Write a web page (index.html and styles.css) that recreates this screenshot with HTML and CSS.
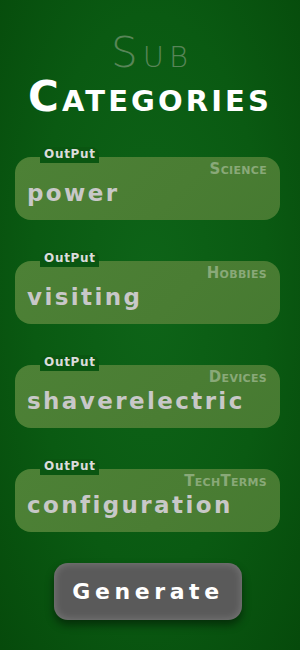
FILE: index.html
```html
<html>

<head>
  <title>Sub Categories</title>
  <link rel="stylesheet" href="styles.css">
</head>

<body>
  <div class="page">
    <div class="title">
      <div class="title-sub">Sub</div>
      <div class="title-main">Categories</div>
    </div>

    <div class="list">
      <div class="card">
        <span class="tab">OutPut</span>
        <div class="category">Science</div>
        <div class="word">power</div>
      </div>
      <div class="card">
        <span class="tab">OutPut</span>
        <div class="category">Hobbies</div>
        <div class="word">visiting</div>
      </div>
      <div class="card">
        <span class="tab">OutPut</span>
        <div class="category">Devices</div>
        <div class="word">shaverelectric</div>
      </div>
      <div class="card">
        <span class="tab">OutPut</span>
        <div class="category">TechTerms</div>
        <div class="word">configuration</div>
      </div>
    </div>

    <div class="actions">
      <button class="generate">Generate</button>
    </div>
  </div>
</body>

</html>
```

FILE: styles.css
```css
body {
  margin: 0;
  width: 300px;
  height: 650px;
  overflow: hidden;
  font-family: 'DejaVu Sans', sans-serif;
  background: radial-gradient(ellipse at 50% 45%, #0e6418 0%, #0a5a12 55%, #064a0b 100%);
}

.page {
  display: flex;
  flex-direction: column;
  padding-top: 32px;
}

.title {
  text-align: center;
  line-height: 1;
}

.title-sub {
  font-size: 42px;
  font-weight: 200;
  color: #588558;
  font-variant: small-caps;
  letter-spacing: 5px;
  margin-left: 4px;
}

.title-main {
  margin-top: 2px;
  font-size: 42px;
  font-weight: bold;
  color: #fff;
  font-variant: small-caps;
  letter-spacing: 3.1px;
}

.list {
  display: flex;
  flex-direction: column;
  gap: 41px;
  margin: 39px 20px 0 15px;
}

.card {
  position: relative;
  height: 63px;
  box-sizing: border-box;
  padding: 2px 13px 0 12px;
  border-radius: 16px;
  background: linear-gradient(135deg, #4d8136 0%, #4a7d33 60%, #467a31 100%);
}

.tab {
  position: absolute;
  top: -10px;
  left: 25px;
  padding: 0 3px 1px 4px;
  border-radius: 8px 8px 0 0;
  background: #0a5611;
  color: #dcdcdc;
  font-size: 12px;
  font-weight: bold;
  letter-spacing: 0.7px;
  line-height: 15px;
}

.category {
  text-align: right;
  font-size: 15px;
  font-weight: bold;
  font-variant: small-caps;
  color: #89a978;
  line-height: 20px;
  letter-spacing: 0.3px;
}

.word {
  font-size: 23px;
  font-weight: bold;
  letter-spacing: 2.4px;
  color: #c8c8c8;
  line-height: 28px;
}

.actions {
  display: flex;
  justify-content: center;
  margin-top: 31px;
}

.generate {
  width: 188px;
  height: 57px;
  margin-left: -4px;
  border: none;
  border-radius: 14px;
  background: #5a5a5a;
  box-shadow: inset 0 0 9px rgba(255, 255, 255, 0.22), 0 5px 9px rgba(0, 0, 0, 0.45);
  color: #fff;
  font-family: 'DejaVu Sans', sans-serif;
  font-size: 22px;
  font-weight: bold;
  letter-spacing: 4.6px;
  padding-left: 6px;
}
```
